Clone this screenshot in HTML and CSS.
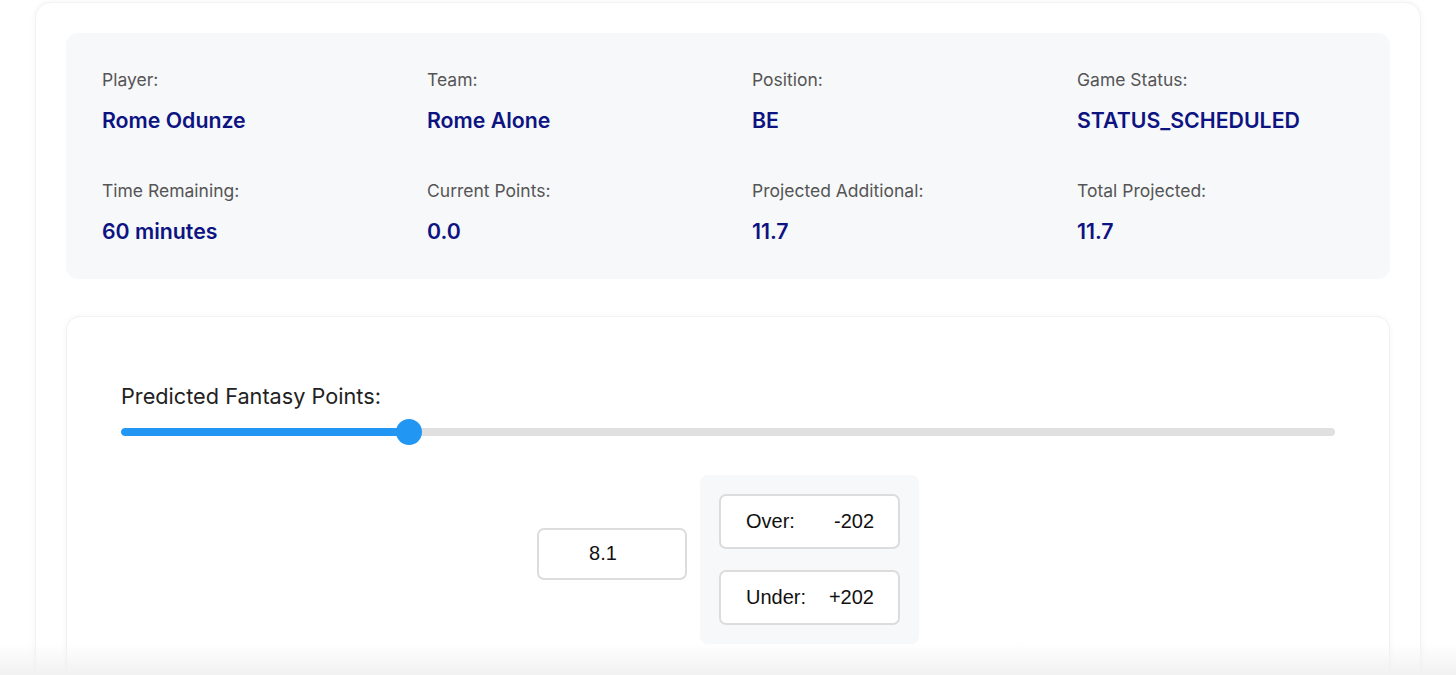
FILE: index.html
```html
<!DOCTYPE html>
<html>
<head>
<meta charset="utf-8">
<link rel="stylesheet" href="styles.css">
</head>
<body>
<div class="page">
  <div class="outer">
    <div class="info">
      <div class="item"><div class="label">Player:</div><div class="value">Rome Odunze</div></div>
      <div class="item"><div class="label">Team:</div><div class="value">Rome Alone</div></div>
      <div class="item"><div class="label">Position:</div><div class="value">BE</div></div>
      <div class="item"><div class="label">Game Status:</div><div class="value">STATUS_SCHEDULED</div></div>
      <div class="item"><div class="label">Time Remaining:</div><div class="value">60 minutes</div></div>
      <div class="item"><div class="label">Current Points:</div><div class="value">0.0</div></div>
      <div class="item"><div class="label">Projected Additional:</div><div class="value">11.7</div></div>
      <div class="item"><div class="label">Total Projected:</div><div class="value">11.7</div></div>
    </div>
    <div class="predict">
      <div class="plabel">Predicted Fantasy Points:</div>
      <div class="slider">
        <div class="track"><div class="fill" style="width: 23.7%"></div></div>
        <div class="thumb" style="left: 23.7%"></div>
      </div>
      <div class="row">
        <div class="inputbox">8.1</div>
        <div class="odds">
          <div class="odd"><span>Over:</span><span>-202</span></div>
          <div class="odd"><span>Under:</span><span>+202</span></div>
        </div>
      </div>
    </div>
  </div>
</div>
<div class="fade"></div>
</body>
</html>
```

FILE: styles.css
```css
* { box-sizing: border-box; }
html, body { margin: 0; padding: 0; background: #ffffff; }
body { font-family: Inter, "Noto Sans", sans-serif; overflow: hidden; height: 675px; }
.page { padding: 2px 35px 0 35px; }
.outer {
  background: #fff;
  border-radius: 16px;
  box-shadow: 0 0 6px rgba(0,0,0,0.05);
  border: 1px solid #f3f3f3;
  padding: 30px 30px 0 30px;
  height: 720px;
}
.info {
  background: #f7f8fa;
  border-radius: 12px;
  padding: 36px 36px 35px 36px;
  display: grid;
  grid-template-columns: repeat(4, 1fr);
  column-gap: 48px;
  row-gap: 47px;
}
.label { font-size: 17.5px; color: #555; line-height: 22px; }
.value { font-size: 21.3px; font-weight: 600; color: #0d1482; line-height: 26px; margin-top: 16px; }
.predict {
  margin-top: 37px;
  background: #fff;
  border-radius: 14px;
  border: 1px solid #f2f2f2;
  box-shadow: 0 0 6px rgba(0,0,0,0.04);
  padding: 66px 54px 40px 54px;
  height: 500px;
}
.plabel { font-size: 21.7px; color: #222; line-height: 26px; }
.slider { position: relative; height: 26px; margin-top: 10px; }
.track { position: absolute; left: 0; right: 0; top: 9px; height: 8px; background: #e0e0e0; border-radius: 4px; overflow: hidden; }
.fill { height: 100%; background: #2196f3; border-radius: 4px; }
.thumb { position: absolute; top: 0; width: 26px; height: 26px; margin-left: -13px; border-radius: 50%; background: #2196f3; }
.row { display: flex; justify-content: center; align-items: center; gap: 13px; margin-top: 30px; }
.inputbox {
  width: 150px; height: 52px; border: 2px solid #dcdcdc; border-radius: 7px;
  display: flex; align-items: center; justify-content: center; padding-right: 18px;
  margin-bottom: 12px;
  font-family: "Liberation Sans", Arial, sans-serif; font-size: 20px; color: #111;
}
.odds { background: #f7f8fa; border-radius: 8px; padding: 19px; display: flex; flex-direction: column; gap: 21px; }
.odd {
  width: 181px; height: 55px; border: 2px solid #dcdcdc; border-radius: 7px; background: #fff;
  display: flex; align-items: center; justify-content: space-between; padding: 0 24px 0 25px;
  font-family: "Liberation Sans", Arial, sans-serif; font-size: 20px; color: #111;
}
.fade { position: fixed; left: 0; right: 0; bottom: 0; height: 32px; background: linear-gradient(to bottom, rgba(240,240,240,0), rgba(240,240,240,0.9)); }
```
